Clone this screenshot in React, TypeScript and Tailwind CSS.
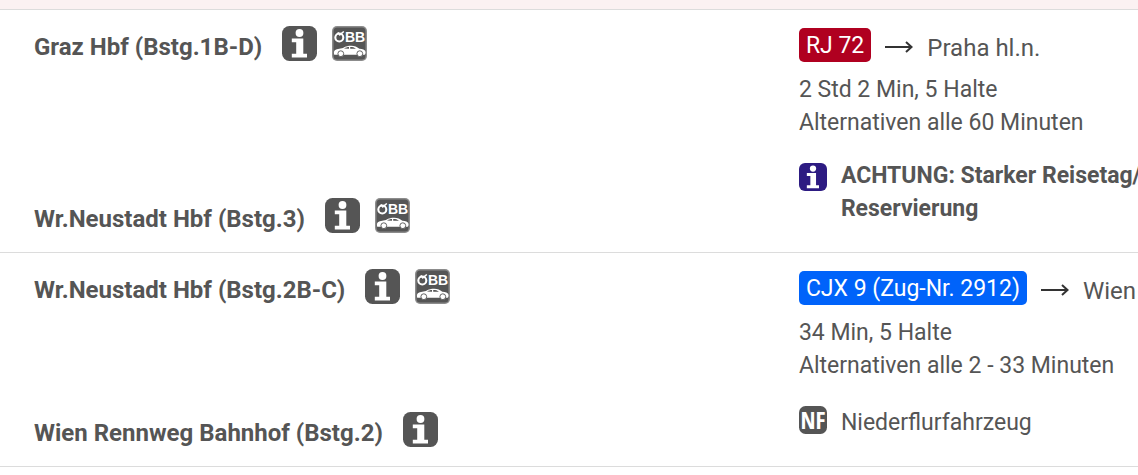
import type { ReactNode } from 'react';

// ============================================
// Icons
// ============================================

function InfoIcon({ className }: { className: string }) {
    return (
        <svg viewBox="0 0 35 35" className={className} role="img" aria-label="Information">
            <rect width="35" height="35" rx="7.5" fill="currentColor" />
            <circle cx="17.5" cy="7" r="3.9" fill="#fff" />
            <path d="M9.8 12.5h11.5v15.2h3.7v3.8H9.8v-3.8h4.4V16.3H9.8z" fill="#fff" />
        </svg>
    );
}

function CarIcon() {
    return (
        <svg viewBox="0 0 35 35" className="size-[35px] shrink-0 text-[#555]" role="img" aria-label="ÖBB Rail&Drive">
            <rect width="35" height="35" rx="5" fill="#8c8c8c" />
            <rect x="1.5" y="1.5" width="32" height="32" rx="3.5" fill="currentColor" />
            <circle cx="7.3" cy="11.5" r="4" fill="none" stroke="#fff" strokeWidth="2.1" />
            <path d="M5.8 6.5l2 2.3 4-3.3" fill="none" stroke="#fff" strokeWidth="1.6" />
            <text x="13" y="16.3" fill="#fff" fontSize="14" fontWeight="700" fontFamily="Liberation Sans, sans-serif">
                BB
            </text>
            <path
                d="M2.2 28.7c-.8-3 0-5 2.6-5.500l6.200-1.200c3-1.800 5.200-2.200 8.200-2.200 3.700 0 5.500 1 8.200 3 3.300.3 5.300.9 6 2.700.4 1.200.1 2.500-.7 3.200z"
                fill="#fff"
            />
            <path d="M12 22.600c2-1.100 3.300-1.400 5-1.500v1.600zM18.200 21.100c2.600 0 4 .4 5.800 1.700h-5.800z" fill="currentColor" />
            <circle cx="8.8" cy="27.7" r="2.9" fill="#fff" stroke="currentColor" strokeWidth="0.9" />
            <circle cx="27.8" cy="27.7" r="2.9" fill="#fff" stroke="currentColor" strokeWidth="0.9" />
        </svg>
    );
}

function LowFloorIcon() {
    return (
        <svg viewBox="0 0 28 28" className="size-7 shrink-0 overflow-visible" aria-hidden="true">
            <rect width="28" height="28" rx="6.5" fill="#555" />
            <text x="14" y="22.5" textAnchor="middle" fill="#fff" fontSize="24" fontWeight="700" fontFamily="Open Sans Condensed, Roboto Condensed, sans-serif">
                NF
            </text>
        </svg>
    );
}

function ArrowIcon() {
    return (
        <svg viewBox="0 0 28 14" className="h-3.5 w-7 shrink-0" aria-hidden="true">
            <path d="M0 7h26M21 2l5.5 5-5.5 5" fill="none" stroke="#333" strokeWidth="2" />
        </svg>
    );
}

// ============================================
// Journey Section
// ============================================

interface StationProps {
    name: string;
    hasCar?: boolean;
}

function Station({ name, hasCar }: StationProps) {
    return (
        <div className="flex items-center gap-5">
            <span className="pt-2 text-2xl leading-[27px] font-bold">{name}</span>
            <span className="flex gap-[15px]">
                <InfoIcon className="size-[35px] shrink-0 text-[#555]" />
                {hasCar && <CarIcon />}
            </span>
        </div>
    );
}

interface SectionProps {
    from: StationProps;
    to: StationProps;
    train: string;
    trainColor: string;
    direction: string;
    duration: string;
    alternatives: string;
    children: ReactNode;
}

function Section({ from, to, train, trainColor, direction, duration, alternatives, children }: SectionProps) {
    return (
        <section className="flex border-b border-[#dcdcdc]">
            <div className="flex w-[70.2%] shrink-0 flex-col justify-between pb-[19px] pl-[34px] pt-4">
                <Station {...from} />
                <Station {...to} />
            </div>
            <div className="min-w-0 flex-1 whitespace-nowrap pt-[18px]">
                <div className="flex items-center gap-3.5">
                    <span className={`rounded-[5px] px-[7px] pt-0.5 leading-8 text-white ${trainColor}`}>{train}</span>
                    <span className="flex pt-1">
                        <ArrowIcon />
                    </span>
                    <span className="pt-1.5 text-2xl leading-7">{direction}</span>
                </div>
                <p className="mt-[11px]">{duration}</p>
                <p>{alternatives}</p>
                {children}
            </div>
        </section>
    );
}

export default function App() {
    return (
        <main className="overflow-hidden bg-white font-[Roboto,sans-serif] text-[23px] leading-[33px] text-[#555]">
            <div className="h-2.5 border-b border-[#dcdcdc] bg-[#fbf1f2]" />
            <Section
                from={{ name: 'Graz Hbf (Bstg.1B-D)', hasCar: true }}
                to={{ name: 'Wr.Neustadt Hbf (Bstg.3)', hasCar: true }}
                train="RJ 72"
                trainColor="bg-[#b00020]"
                direction="Praha hl.n."
                duration="2 Std 2 Min, 5 Halte"
                alternatives="Alternativen alle 60 Minuten"
            >
                <div className="flex items-start gap-3.5 pb-[27px] pt-5">
                    <InfoIcon className="mt-1 size-7 shrink-0 text-[#2d1b82]" />
                    <p className="font-bold">
                        ACHTUNG: Starker Reisetag/
                        <br />
                        Reservierung
                    </p>
                </div>
            </Section>
            <Section
                from={{ name: 'Wr.Neustadt Hbf (Bstg.2B-C)', hasCar: true }}
                to={{ name: 'Wien Rennweg Bahnhof (Bstg.2)' }}
                train="CJX 9 (Zug-Nr. 2912)"
                trainColor="bg-[#0063fa]"
                direction="Wien"
                duration="34 Min, 5 Halte"
                alternatives="Alternativen alle 2 - 33 Minuten"
            >
                <div className="flex items-start gap-3.5 pb-[27px] pt-6">
                    <LowFloorIcon />
                    <p>Niederflurfahrzeug</p>
                </div>
            </Section>
        </main>
    );
}
